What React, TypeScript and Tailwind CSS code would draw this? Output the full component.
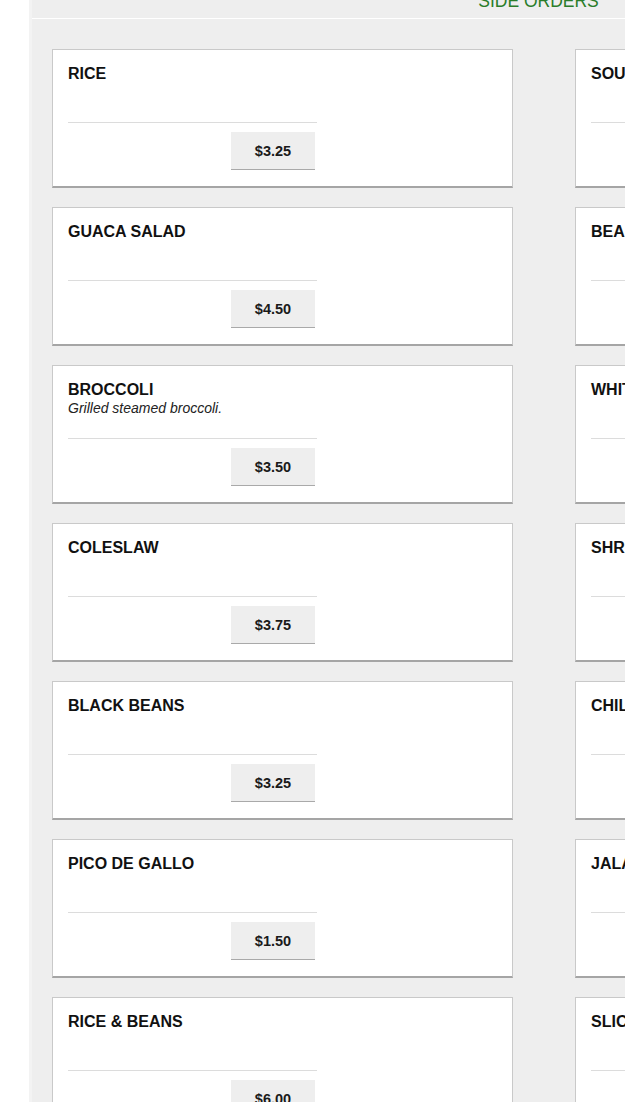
const items = [
  { name: 'RICE', price: '$3.25' },
  { name: 'SOUR CREAM', price: '$1.50' },
  { name: 'GUACA SALAD', price: '$4.50' },
  { name: 'BEANS', price: '$3.25' },
  { name: 'BROCCOLI', desc: 'Grilled steamed broccoli.', price: '$3.50' },
  { name: 'WHITE RICE', price: '$3.25' },
  { name: 'COLESLAW', price: '$3.75' },
  { name: 'SHREDDED CHEESE', price: '$1.50' },
  { name: 'BLACK BEANS', price: '$3.25' },
  { name: 'CHILES TOREADOS', price: '$2.50' },
  { name: 'PICO DE GALLO', price: '$1.50' },
  { name: 'JALAPEÑOS', price: '$1.00' },
  { name: 'RICE & BEANS', price: '$6.00' },
  { name: 'SLICED AVOCADO', price: '$3.00' },
]

function ItemCard({ name, desc, price }: { name: string; desc?: string; price: string }) {
  return (
    <div className="flex h-[139px] flex-col border border-b-2 border-[#c9c9c9] border-b-[#a5a5a5] bg-white px-[15px] pt-[15px]">
      <div className="h-[57px] w-[249px] shrink-0">
        <h3 className="whitespace-nowrap text-[16px] font-bold leading-[18px] text-[#111]">{name}</h3>
        {desc && <p className="text-[14px] italic leading-[18px] text-[#222]">{desc}</p>}
      </div>
      <div className="flex w-[249px] justify-end border-t border-[#dcdcdc] pt-[9px]">
        <button className="mr-[2px] h-[38px] w-[84px] border-b border-[#a9a9a9] bg-[#eeeeee] pt-[2px] text-[14.5px] font-bold text-[#1a1a1a]">
          {price}
        </button>
      </div>
    </div>
  )
}

export default function App() {
  return (
    <div className="h-[1102px] w-[625px] overflow-hidden bg-white" style={{ fontFamily: '"Liberation Sans", Arial, sans-serif' }}>
      <div className="ml-[29px] min-h-full w-[1016px] border-l-[3px] border-[#f3f3f3] bg-[#eeeeee]">
        <header className="flex h-[19px] justify-center overflow-hidden border-b border-white">
          <h2 className="-mt-[8px] text-[17.5px] leading-[18px] text-[#2a7d2a]">SIDE ORDERS</h2>
        </header>
        <div className="grid w-[1030px] grid-cols-[461px_461px] gap-x-[62px] gap-y-[19px] pl-[20px] pt-[30px]">
          {items.map((it) => (
            <ItemCard key={it.name} {...it} />
          ))}
        </div>
      </div>
    </div>
  )
}
